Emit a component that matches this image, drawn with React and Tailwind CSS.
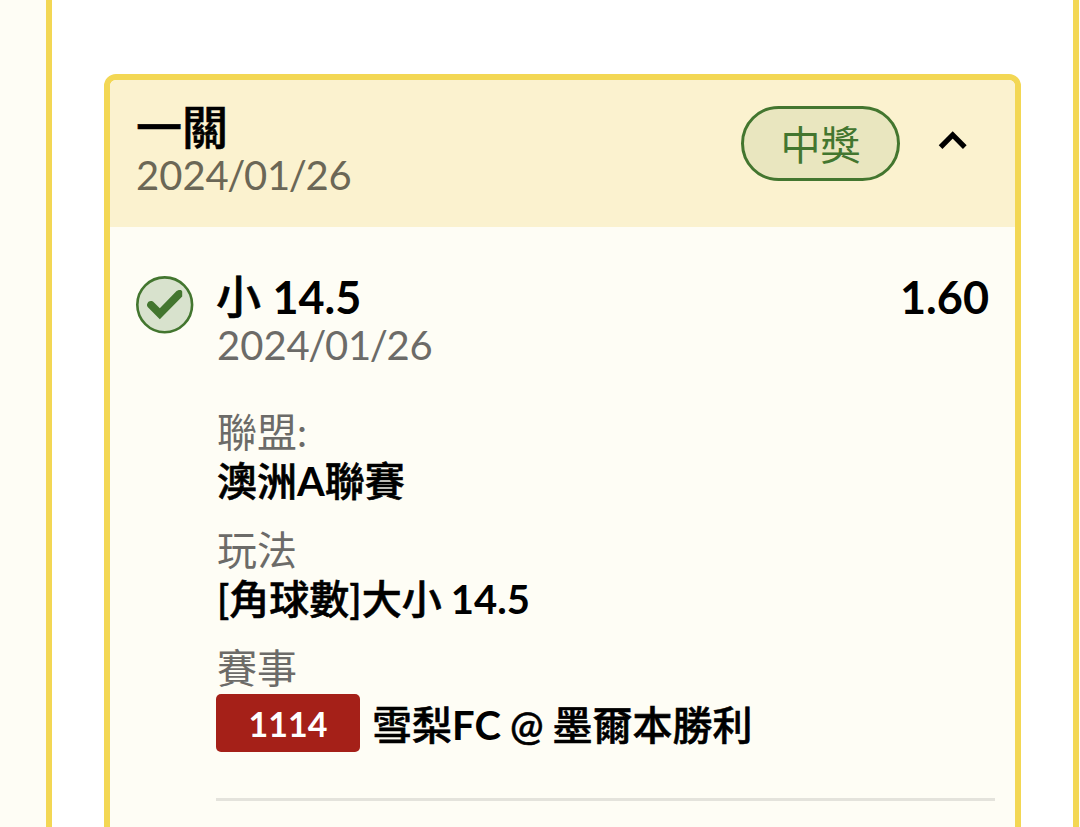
const details = [
  { label: '聯盟:', value: '澳洲A聯賽' },
  { label: '玩法', value: '[角球數]大小 14.5' },
]

function StatusBadge({ children }) {
  return (
    <span className="flex items-center justify-center w-[159px] h-[75px] rounded-full border-3 border-[#43762f] bg-[#e9e6bf] text-[#43762f] text-[40px] leading-[40px] pt-[3px]">
      {children}
    </span>
  )
}

// Chinese glyphs look too heavy at bold, so only latin runs use the bold weight
function StrongText({ children }) {
  return children.split(/([A-Za-z0-9.]+)/).map((part, i) => (
    <span
      key={i}
      className={i % 2 ? 'font-bold' : 'font-medium [-webkit-text-stroke:0.6px_currentColor]'}
    >
      {part}
    </span>
  ))
}

function DateText({ value }) {
  const [year, month, day] = value.split('/')
  return (
    <>
      {year}
      <span className="-mx-[1.5px]">/</span>
      {month}
      <span className="-mx-[1.5px]">/</span>
      {day}
    </>
  )
}

function WinIcon() {
  return (
    <svg className="w-[58px] h-[58px] mt-px flex-shrink-0" viewBox="0 0 58 58" fill="none">
      <circle cx="28.7" cy="28.8" r="27.4" fill="#d8e2cd" stroke="#43762f" strokeWidth="2.6" />
      <path
        d="M11.5 27.2C12.7 24.4 16 24.4 18 26.4L23.8 32.2L39.6 15.9C42.2 13.3 46.2 13.6 46.2 15.8V20.4L23.8 43.2L11.9 31.2C10.8 30 10.7 28.5 11.5 27.2Z"
        fill="#43762f"
      />
    </svg>
  )
}

function ChevronUp() {
  return (
    <svg className="w-[30px] h-[20px] mb-[7px]" viewBox="0 0 30 20" fill="none">
      <path d="M2.6 17.2L14.7 5L26.8 17.2" stroke="#000" strokeWidth="5.2" />
    </svg>
  )
}

export default function App() {
  return (
    <div className="flex h-[827px] w-[1080px] overflow-hidden bg-[#fefdf5] font-['Lato','Noto_Sans_CJK_TC',sans-serif] text-black">
      <div className="ml-[46px] w-[1033px] border-x-6 border-[#f3d754] bg-white pt-[74px] pl-[52px]">
        <div className="w-[917px] h-[800px] rounded-[12px] border-6 border-[#f3d754] bg-[#fefdf5] overflow-hidden">
          <div className="flex h-[147px] bg-[#fbf2cf] pl-[26px] pt-[23px]">
            <div className="flex-1">
              <div className="text-[46px] leading-[48px]">
                <StrongText>一關</StrongText>
              </div>
              <div className="text-[40px] leading-[48px] text-[#6b6756]">
                <DateText value="2024/01/26" />
              </div>
            </div>
            <div className="flex h-[75px] items-center gap-[38px] mt-[3px] pr-[47px]">
              <StatusBadge>中獎</StatusBadge>
              <ChevronUp />
            </div>
          </div>

          <div className="flex pt-[48px] pl-[26px] pr-[20px]">
            <WinIcon />
            <div className="flex-1 -mt-px ml-[22px]">
              <div className="flex justify-between pr-[6px] text-[45px] leading-[47px]">
                <span><StrongText>小 14.5</StrongText></span>
                <span><StrongText>1.60</StrongText></span>
              </div>
              <div className="pl-px text-[40px] leading-[48px] text-[#6c6b68]">
                <DateText value="2024/01/26" />
              </div>

              <div className="mt-[39px] text-[40px]">
                {details.map((item) => (
                  <div key={item.label} className="mb-[20px] pl-px">
                    <div className="leading-[48px] text-[#6c6b68]">{item.label}</div>
                    <div className="leading-[50px] [word-spacing:-1px]">
                      <StrongText>{item.value}</StrongText>
                    </div>
                  </div>
                ))}
                <div className="pl-px leading-[48px] text-[#6c6b68]">賽事</div>
                <div className="flex items-center gap-[12px] mt-[2px]">
                  <span className="flex h-[58px] w-[144px] items-center justify-center rounded-[5px] bg-[#a52018] pt-px text-[34px] font-bold text-white">
                    1114
                  </span>
                  <span className="leading-[54px] pt-[4px] [word-spacing:-1px]">
                    <StrongText>雪梨FC @ 墨爾本勝利</StrongText>
                  </span>
                </div>
              </div>
              <div className="mt-[46px] h-[3px] bg-[#e4e3dc]" />
            </div>
          </div>
        </div>
      </div>
    </div>
  )
}
